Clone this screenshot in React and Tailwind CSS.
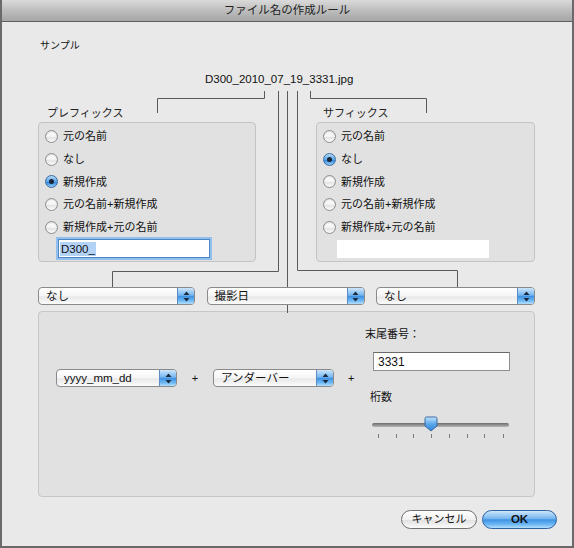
import React from 'react'

const BLUE =
  'bg-[linear-gradient(to_bottom,#cde6fb,#74b6f0_45%,#3f92e4_52%,#6fb9f4_80%,#b4e0fc)]'

function Radio({ checked, label }) {
  return (
    <div className="flex h-[22.7px] items-center pl-[6px]">
      {checked ? (
        <span className="flex h-[13px] w-[13px] items-center justify-center rounded-full border border-[#3d6c9f] bg-[linear-gradient(to_bottom,#b3daf8,#5aa5ea_50%,#2f86de_55%,#93cff8)]">
          <span className="h-[5px] w-[5px] rounded-full bg-[#1b2535]" />
        </span>
      ) : (
        <span className="h-[13px] w-[13px] rounded-full border border-[#8e8e8e] bg-[linear-gradient(to_bottom,#ffffff,#f3f3f3_50%,#e2e2e2_55%,#fbfbfb)] shadow-[inset_0_1px_1px_rgba(0,0,0,0.15)]" />
      )}
      <span className="ml-[5px] text-[11px] leading-[14px] text-[#111]">{label}</span>
    </div>
  )
}

function Popup({ label, className }) {
  return (
    <div
      className={`flex h-[18px] items-stretch overflow-hidden rounded-[4px] border border-[#8a8a8a] bg-[linear-gradient(to_bottom,#ffffff,#f5f5f5_50%,#e8e8e8_55%,#fbfbfb)] ${className}`}
    >
      <span className="flex-1 pl-[7px] text-[11.5px] leading-[16px] text-[#111]">{label}</span>
      <span className={`flex w-[17px] items-center justify-center border-l border-[#5b8cc4] ${BLUE}`}>
        <svg width="7" height="11" viewBox="0 0 7 11">
          <path d="M3.5 0.5 L6.5 4 H0.5 Z" fill="#1c2a3c" />
          <path d="M3.5 10.5 L6.5 7 H0.5 Z" fill="#1c2a3c" />
        </svg>
      </span>
    </div>
  )
}

const prefixOptions = ['元の名前', 'なし', '新規作成', '元の名前+新規作成', '新規作成+元の名前']

export default function App() {
  return (
    <div className="relative h-[548px] w-[574px] font-['Liberation_Sans','Noto_Sans_CJK_JP',sans-serif] text-[#111]">
      <div className="flex h-full flex-col border-x-2 border-b-2 border-[#6a6a6a] bg-[#e9e9e9]">
        {/* title bar */}
        <div className="flex h-[22px] shrink-0 items-center justify-center border-b border-[#5e5e5e] bg-[linear-gradient(to_bottom,#dadada,#bdbdbd_50%,#a6a6a6)] text-[11.5px] text-[#222]">
          ファイル名の作成ルール
        </div>

        <div className="flex flex-1 flex-col pl-[36px] pr-[37px]">
          <div className="mt-[16px] pl-[2px] text-[10px] leading-[16px]">サンプル</div>
          <div className="mt-[17px] pl-[167px] text-[11.5px] leading-[16px]">D300_2010_07_19_3331.jpg</div>

          {/* prefix / suffix groups */}
          <div className="mt-[19px] flex justify-between">
            <div className="w-[218px]">
              <div className="pl-[9px] text-[11px] leading-[14px] text-[#222]">プレフィックス</div>
              <div className="mt-[2px] h-[140px] rounded-[4px] border border-[#c4c4c4] bg-[#e1e1e1] pt-[2px]">
                {prefixOptions.map((o) => (
                  <Radio key={o} label={o} checked={o === '新規作成'} />
                ))}
                <div className="ml-[19px] mt-[1px] flex h-[19px] w-[152px] items-center border border-[#4f86c6] bg-white shadow-[0_0_0_2px_#91c0ee]">
                  <span className="ml-[1px] bg-[#b3d3f6] px-[1px] text-[11.5px] leading-[14px]">D300_</span>
                </div>
              </div>
            </div>
            <div className="w-[219px]">
              <div className="pl-[7px] text-[11px] leading-[14px] text-[#222]">サフィックス</div>
              <div className="mt-[2px] h-[140px] rounded-[4px] border border-[#c4c4c4] bg-[#e1e1e1] pt-[2px]">
                {prefixOptions.map((o) => (
                  <Radio key={o} label={o} checked={o === 'なし'} />
                ))}
                <div className="ml-[20px] mt-[2px] h-[18px] w-[152px] bg-white" />
              </div>
            </div>
          </div>

          {/* popups */}
          <div className="mt-[25px] flex justify-between">
            <Popup label="なし" className="w-[157px]" />
            <Popup label="撮影日" className="w-[158px]" />
            <Popup label="なし" className="w-[159px]" />
          </div>

          {/* lower box */}
          <div className="mt-[6px] flex h-[186px] rounded-[4px] border border-[#c6c6c6] bg-[#e1e1e1] pl-[17px]">
            <div className="mt-[57px] flex h-[18px] items-center">
              <Popup label="yyyy_mm_dd" className="w-[121px]" />
              <span className="w-[36px] text-center text-[11px]">+</span>
              <Popup label="アンダーバー" className="w-[121px]" />
              <span className="ml-[14px] w-[6px] text-center text-[11px]">+</span>
            </div>
            <div className="ml-[11px] flex flex-col pt-[14px]">
              <div className="text-[11px] leading-[16px]">末尾番号：</div>
              <div className="ml-[8px] mt-[10px] flex h-[19px] w-[137px] items-center border border-[#8e8e8e] border-t-[#6a6a6a] bg-white pl-[4px] text-[12px]">
                3331
              </div>
              <div className="ml-[5px] mt-[18px] text-[11px] leading-[16px]">桁数</div>
              <svg className="ml-[6px] mt-[9px]" width="140" height="26" viewBox="0 0 140 26">
                <defs>
                  <linearGradient id="trk" x1="0" y1="0" x2="0" y2="1">
                    <stop offset="0" stopColor="#6b6b6b" />
                    <stop offset="1" stopColor="#b5b5b5" />
                  </linearGradient>
                  <linearGradient id="thb" x1="0" y1="0" x2="0" y2="1">
                    <stop offset="0" stopColor="#c4e4fb" />
                    <stop offset="0.5" stopColor="#5aa8ec" />
                    <stop offset="1" stopColor="#2f86de" />
                  </linearGradient>
                </defs>
                <rect x="1" y="9" width="137" height="4" rx="2" fill="url(#trk)" />
                <path d="M54 4.5 Q54 3 55.5 3 H64.5 Q66 3 66 4.5 V12 L60 17 L54 12 Z" fill="url(#thb)" stroke="#3b6a9e" strokeWidth="1" />
                {[7, 25, 42, 60, 78, 96, 113, 132].map((x) => (
                  <line key={x} x1={x + 0.5} y1="20" x2={x + 0.5} y2="24" stroke="#7a7a7a" strokeWidth="1" />
                ))}
              </svg>
            </div>
          </div>

          {/* buttons */}
          <div className="-mr-[22px] mt-[13px] flex justify-end gap-[5px]">
            <button className="flex h-[19px] w-[76px] items-center justify-center rounded-full border border-[#707070] bg-[linear-gradient(to_bottom,#ffffff,#f1f1f1_50%,#e2e2e2_55%,#fbfbfb)] text-[11px] leading-none text-[#111]">
              キャンセル
            </button>
            <button className={`flex h-[19px] w-[75px] items-center justify-center rounded-full border border-[#2e63a3] text-[11.5px] font-bold leading-none text-[#111] ${BLUE}`}>
              OK
            </button>
          </div>
        </div>
      </div>

      {/* connector lines from the sample name */}
      <svg className="pointer-events-none absolute left-0 top-0" width="574" height="548" viewBox="0 0 574 548">
        <g fill="none" stroke="#5a5a5a" strokeWidth="1">
          <path d="M157.5 113 V98.5 H264.5 V91" />
          <path d="M278.5 91 V271.5 H112.5 V287" />
          <path d="M287.5 91 V287" />
          <path d="M287.5 305 V313" />
          <path d="M297.5 91 V270.5 H457.5 V287" />
          <path d="M310.5 91 V98.5 H426.5 V113" />
        </g>
      </svg>
    </div>
  )
}
